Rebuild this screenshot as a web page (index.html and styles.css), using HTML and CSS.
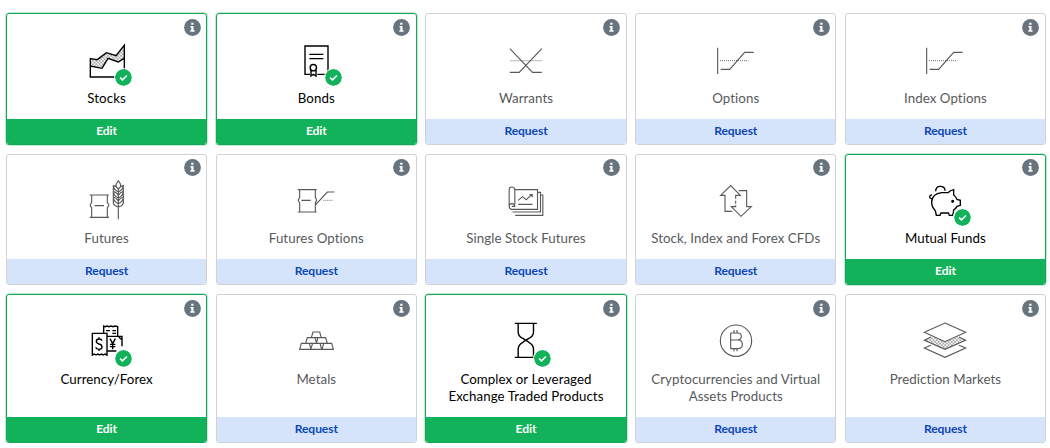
FILE: index.html
```html
<!DOCTYPE html>
<html lang="en">
<head>
<meta charset="utf-8">
<title>Trading Products</title>
<link rel="stylesheet" href="styles.css">
</head>
<body>
<svg class="defs" aria-hidden="true">
  <defs>
    <pattern id="dots" width="10" height="10" patternUnits="userSpaceOnUse"><circle cx="2.5" cy="2.5" r="1.7"/><circle cx="7.5" cy="7.5" r="1.7"/></pattern>
    <symbol id="info" viewBox="0 0 17 17"><circle cx="8.5" cy="8.5" r="8.4" fill="#67737d"/><path d="M7.2 3.7h2.3v2H7.2zM6.5 6.9h3v4.3h1.1v1.6H6.3v-1.6h1V8.4h-.8z" fill="#fff"/></symbol>
    <symbol id="check" viewBox="0 0 17 17"><circle cx="8.5" cy="8.5" r="8.4" fill="#12b25b"/><path d="M5.1 8.6l2.4 2.3 4.4-4.4" fill="none" stroke="#fff" stroke-width="1.5"/></symbol>
  </defs>
</svg>
<main class="products">
  <section class="card active">
    <svg class="info"><use href="#info"/></svg>
    <div class="icon"><svg class="art" viewBox="248 86 144 144"><path d="M270 151l21 3 27-21 29 9 24-31v39l-17 11-30-12-16 30-38-7z" fill="url(#dots)" stroke="none"/><path d="M270 151l21 3 27-21 29 9 25-31v95H270zM270 173l35 7 18-30 31 11 17-11"/></svg><svg class="badge"><use href="#check"/></svg></div>
    <h2 class="label">Stocks</h2>
    <button class="action">Edit</button>
  </section>
  <section class="card active">
    <svg class="info"><use href="#info"/></svg>
    <div class="icon"><svg class="art" viewBox="247 86 144 144"><path d="M301 198h-15v-85h69v85h-32M299 138h42M299 151h42M304 184v19l7-5 8 5v-19"/><circle cx="311" cy="178" r="9.5"/></svg><svg class="badge"><use href="#check"/></svg></div>
    <h2 class="label">Bonds</h2>
    <button class="action">Edit</button>
  </section>
  <section class="card">
    <svg class="info"><use href="#info"/></svg>
    <div class="icon"><svg class="art" viewBox="246.5 86 144 144"><path d="M270 121l68 71h28M366 121l-68 71h-28"/><path class="dotted" d="M272 157h96"/></svg></div>
    <h2 class="label">Warrants</h2>
    <button class="action">Request</button>
  </section>
  <section class="card">
    <svg class="info"><use href="#info"/></svg>
    <div class="icon"><svg class="art" viewBox="231 86 144 144"><path d="M248 118v79M257 183h27l45-51h27"/><path class="dotted" d="M255 157h85"/></svg></div>
    <h2 class="label">Options</h2>
    <button class="action">Request</button>
  </section>
  <section class="card">
    <svg class="info"><use href="#info"/></svg>
    <div class="icon"><svg class="art" viewBox="231 86 144 144"><path d="M248 118v79M257 183h27l45-51h27"/><path class="dotted" d="M255 157h85"/></svg></div>
    <h2 class="label">Index Options</h2>
    <button class="action">Request</button>
  </section>

  <section class="card">
    <svg class="info"><use href="#info"/></svg>
    <div class="icon"><svg class="art" viewBox="248 87 144 144"><path d="M268 141h58M268 208h58M274 141v23l-4 5v5l4 5v29M321 141v23l4 5v5l-4 5v29M283 173h28"/><path d="M354 124v90M354 98q-8 10-7 17l7 8 7-8q1-7-7-17M339 112q0 13 15 20q15-7 15-20q-9 2-15 12q-6-10-15-12M339 130q0 13 15 20q15-7 15-20q-9 2-15 12q-6-10-15-12M339 147q0 13 15 20q15-7 15-20q-9 2-15 12q-6-10-15-12M339 164q1 10 15 13q14-3 15-13M339 112v52M369 112v52"/></svg></div>
    <h2 class="label">Futures</h2>
    <button class="action">Request</button>
  </section>
  <section class="card">
    <svg class="info"><use href="#info"/></svg>
    <div class="icon"><svg class="art" viewBox="247 87 144 144"><path d="M264 125h57M264 192h57M270 125v24l-4 5v5l4 5v28M317 125v24l3 4v7l-3 4v28M275 157h28M318 170l35-38h21"/><path class="dotted" d="M341 157h27"/></svg></div>
    <h2 class="label">Futures Options</h2>
    <button class="action">Request</button>
  </section>
  <section class="card">
    <svg class="info"><use href="#info"/></svg>
    <div class="icon"><svg class="art" viewBox="246.5 87 144 144"><path d="M285 125h68v59h-78q-7-1-7-9v-50q0-8 8-8t9 8v44M268 175q0-8 8-8t9 8h-9M354 133h8v59h-84M362 141h7v61h-83M295 169h43M295 157l13-11 11 9 17-15M329 140h8v8"/></svg></div>
    <h2 class="label">Single Stock Futures</h2>
    <button class="action">Request</button>
  </section>
  <section class="card">
    <svg class="info"><use href="#info"/></svg>
    <div class="icon"><svg class="art" viewBox="231 87 144 144"><path d="M292 190h-22v-48h-13l30-29 29 29h-14v10M302 158v9M302 172v4h-13l29 29 31-29h-14v-48h-24"/></svg></div>
    <h2 class="label">Stock, Index and Forex CFDs</h2>
    <button class="action">Request</button>
  </section>
  <section class="card active">
    <svg class="info"><use href="#info"/></svg>
    <div class="icon"><svg class="art" viewBox="860 87 144 144"><path d="M903 188q-12-12-11-27q2-24 30-27h19q7-7 17-9v16q6 4 10 13l10 3v15l-10 3q-5 9-12 13M903 188l3 14h11l3-7h22l3 7h10l3-13M904 130q0-15 14-15t14 13M892 152q-8-1-5-9l6-3"/><circle cx="955" cy="160" r="2.5" fill="currentColor"/></svg><svg class="badge"><use href="#check"/></svg></div>
    <h2 class="label">Mutual Funds</h2>
    <button class="action">Edit</button>
  </section>

  <section class="card active">
    <svg class="info"><use href="#info"/></svg>
    <div class="icon"><svg class="art" viewBox="248 88 144 144"><path d="M276 137h44v65l-6-3-5 3-6-3-5 3-6-3-5 3-5-3-6 3zM310 136v-21l5 2 5-2 6 2 6-2 6 2 6-2 8 2v28M320 146h45v18M320 190h28M356 146q1 7 9 8M317 129h12M336 129h11M336 137h11M365 164v12"/><path d="M305 159q-3-6-9-5q-8 0-8 7q0 6 8 8q9 2 9 9q0 7-9 7q-8 0-10-6M296 149v5M296 185v5M329 153l8 15 8-15M337 168v17M329 170h16M329 177h16"/></svg><svg class="badge"><use href="#check"/></svg></div>
    <h2 class="label">Currency/Forex</h2>
    <button class="action">Edit</button>
  </section>
  <section class="card">
    <svg class="info"><use href="#info"/></svg>
    <div class="icon"><svg class="art" viewBox="247 88 144 144"><path d="M310 133h20l5 17h-30zM293 150h23l5 17h-33zM325 150h23l5 17h-33zM275 167h24l5 18h-34zM309 167h22l5 18h-33zM342 167h24l5 18h-34z"/></svg></div>
    <h2 class="label">Metals</h2>
    <button class="action">Request</button>
  </section>
  <section class="card active">
    <svg class="info"><use href="#info"/></svg>
    <div class="icon"><svg class="art" viewBox="246.5 88 144 144"><path d="M285 107h66M285 209h60M295 108v25q0 13 14 19q11 6 18 12q14 7 14 21v24M341 108v25q0 13-14 19q-11 6-18 12q-14 7-14 21v24"/></svg><svg class="badge"><use href="#check"/></svg></div>
    <h2 class="label">Complex or Leveraged Exchange Traded Products</h2>
    <button class="action">Edit</button>
  </section>
  <section class="card">
    <svg class="info"><use href="#info"/></svg>
    <div class="icon"><svg class="art" viewBox="231 88 144 144"><circle cx="303" cy="159" r="47"/><path d="M286 136h22q11 0 11 10t-11 11h-21 22q13 0 13 13t-13 13h-23M287 136v47M297 127v9M306 127v9M297 183v8M306 183v8"/></svg></div>
    <h2 class="label">Cryptocurrencies and Virtual Assets Products</h2>
    <button class="action">Request</button>
  </section>
  <section class="card">
    <svg class="info"><use href="#info"/></svg>
    <div class="icon"><svg class="art" viewBox="860 88 144 144"><path d="M893 147l39 16 39-16 23 11-62 27-62-27z" fill="url(#dots)" stroke="none"/><path d="M932 106l62 28-62 28-62-28zM890 148l-20 10 62 27 62-27-20-10M890 173l-20 8 62 28 62-28-20-8"/></svg></div>
    <h2 class="label">Prediction Markets</h2>
    <button class="action">Request</button>
  </section>
</main>
</body>
</html>
```
FILE: styles.css
```css
* { box-sizing: border-box; }

body {
  margin: 0;
  background: #fff;
  font-family: Lato, "Open Sans", sans-serif;
}

.defs { position: absolute; width: 0; height: 0; }

.products {
  display: grid;
  grid-template-columns: repeat(5, 1fr);
  grid-template-rows: 131.7px 131.5px 148.6px;
  gap: 8.8px 8.6px;
  padding: 13.2px 4px 0 6px;
}

.card {
  position: relative;
  display: flex;
  flex-direction: column;
  align-items: center;
  overflow: hidden;
  padding-top: 22.5px;
  border: 1px solid #d0d3d6;
  border-radius: 3px;
  color: #58595b;
}

.card.active {
  border-color: #12a858;
  box-shadow: 0 0 0 0.5px #12a85880;
  color: #000;
}

.info {
  position: absolute;
  top: 4.7px;
  right: 5.6px;
  width: 17px;
  height: 17px;
}

.icon {
  position: relative;
  width: 48px;
  height: 48px;
}

.art {
  display: block;
  width: 48px;
  height: 48px;
  fill: none;
  stroke: currentColor;
  stroke-width: 3.4;
}

.active .art { stroke-width: 4.2; }

.dotted {
  stroke-width: 2.6;
  stroke-dasharray: 3 3;
}

.badge {
  position: absolute;
  left: 32.3px;
  top: 32.1px;
  width: 17px;
  height: 17px;
  border-radius: 50%;
  box-shadow: 0 0 0 1px #fff;
}

.label {
  width: 176px;
  margin: 5.2px 0 0;
  font-size: 13.3px;
  font-weight: 400;
  line-height: 17px;
  letter-spacing: 0.07px;
  text-align: center;
}

.action {
  align-self: stretch;
  height: 25px;
  margin-top: auto;
  padding: 0 0 1px;
  border: 0;
  background: #d6e4fb;
  color: #0b47b5;
  font: 700 12.1px/24px Lato, "Open Sans", sans-serif;
  letter-spacing: -0.1px;
}

.active .action {
  background: #12b25b;
  color: #fff;
}
```
